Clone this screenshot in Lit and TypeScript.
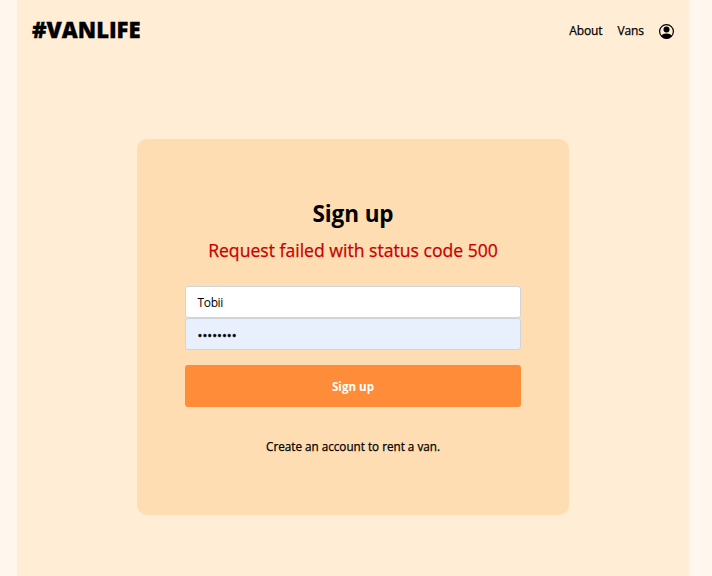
import { LitElement, html, css } from "lit";
import { customElement } from "lit/decorators.js";

@customElement("app-root")
export class AppRoot extends LitElement {
  static styles = css`
    :host { display: block; height: 576px; overflow: hidden; background: #fff7ed; font-family: "Open Sans", "Noto Sans", sans-serif; color: #000; }
    * { box-sizing: border-box; }
    .page { margin-left: 17px; width: 672px; height: 576px; background: #ffedd5; }
    header { height: 62px; padding: 0 15px; display: flex; align-items: center; justify-content: space-between; }
    .t { display: block; white-space: nowrap; flex: none; }
    .logo { font: 800 22px/30px "Open Sans", sans-serif; padding-bottom: 4px; -webkit-text-stroke: 0.3px; }
    nav { display: flex; align-items: center; gap: 15px; font-size: 12px; line-height: 18px; letter-spacing: -0.1px; -webkit-text-stroke: 0.25px; }
    nav .t { padding-bottom: 1px; }
    svg { display: block; width: 15px; height: 15px; }
    .card { width: 432px; height: 376px; margin: 77px 0 0 120px; padding: 59px 48px 0; background: #ffddb2; border-radius: 10px; display: flex; flex-direction: column; align-items: center; }
    h1 { margin: 0; font-size: 22.5px; line-height: 32px; font-weight: 700; letter-spacing: -0.1px; }
    .error { margin-top: 6px; font-size: 17.6px; line-height: 28px; color: #c70000; -webkit-text-stroke: 0.25px; }
    form { width: 336px; margin-top: 22px; }
    .field { height: 32px; border: 1px solid #d1d5db; background: #fff; border-radius: 3px; padding: 0 11.5px; display: flex; align-items: center; font-size: 12px; letter-spacing: -0.35px; }
    .pass { background: #e8f0fe; }
    .pass .t { font-size: 13px; letter-spacing: 0; -webkit-text-stroke: 0.4px; padding-top: 1px; }
    .btn { margin-top: 15px; height: 42px; width: 100%; background: #ff8c38; border-radius: 3px; display: flex; align-items: center; justify-content: center; color: #fff; font-size: 11.6px; font-weight: 700; }
    .note { margin-top: 30px; font-size: 11.7px; line-height: 18px; -webkit-text-stroke: 0.25px; }
  `;
  render() {
    return html`<div class="page">
      <header>
        <span class="t logo">#VANLIFE</span>
        <nav><span class="t">About</span><span class="t">Vans</span>
          <svg viewBox="0 0 15 15"><circle cx="7.5" cy="7.5" r="6.9" fill="none" stroke="#000" stroke-width="1.2"/><circle cx="7.5" cy="5.6" r="3"/><path d="M2.3 12Q3 9.4 7.5 9.4T12.7 12Q10.5 14.5 7.5 14.5T2.3 12Z"/></svg>
        </nav>
      </header>
      <main class="card">
        <h1 class="t">Sign up</h1>
        <span class="t error">Request failed with status code 500</span>
        <form>
          <div class="field"><span class="t">Tobii</span></div>
          <div class="field pass"><span class="t">••••••••</span></div>
          <div class="btn"><span class="t">Sign up</span></div>
        </form>
        <span class="t note">Create an account to rent a van.</span>
      </main>
    </div>`;
  }
}
